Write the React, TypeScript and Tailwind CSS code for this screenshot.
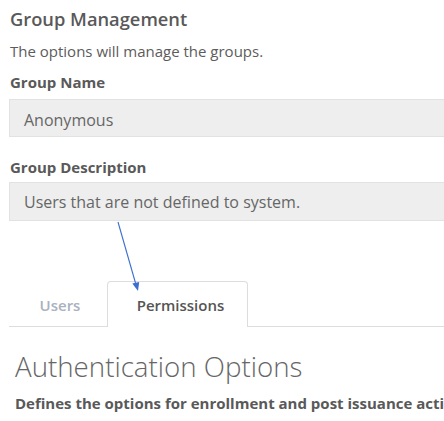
import React from "react";

export default function App() {
  return (
    <div
      className="relative w-[444px] h-[421px] overflow-hidden bg-white pl-[9px]"
      style={{ fontFamily: '"Open Sans", "Liberation Sans", sans-serif' }}
    >
      <div className="pt-[7px] pl-[1px] text-[18.3px] leading-[24px] font-semibold text-[#595959] whitespace-nowrap">
        Group Management
      </div>
      <div className="mt-[10px] pl-[1px] text-[15px] leading-[20px] text-[#5c5c5c] whitespace-nowrap">
        The options will manage the groups.
      </div>
      <div className="mt-[11px] pl-[1px] text-[15px] leading-[20px] font-bold text-[#595959] whitespace-nowrap">
        Group Name
      </div>
      <div className="mt-[7px] h-[38px] w-[460px] border border-[#e2e2e2] bg-[#eeeeee] pl-[14px] pt-[10px] text-[16px] leading-[20px] text-[#666666] whitespace-nowrap">
        Anonymous
      </div>
      <div className="mt-[20px] pl-[1px] text-[15px] leading-[20px] font-bold text-[#595959] whitespace-nowrap">
        Group Description
      </div>
      <div className="mt-[5px] h-[39px] w-[460px] border border-[#e2e2e2] bg-[#eeeeee] pl-[14px] pt-[9px] text-[16px] leading-[20px] text-[#666666] whitespace-nowrap">
        Users that are not defined to system.
      </div>

      <div className="mt-[60px] flex h-[46px] w-[460px] border-b border-[#dddddd]">
        <div className="flex w-[98px] items-start justify-center pt-[14px] pl-[4px] text-[15px] leading-[20px] font-semibold text-[#aab1bf]">
          Users
        </div>
        <div className="-mb-px flex w-[141px] items-start justify-center rounded-t-[4px] border border-b-0 border-[#dddddd] bg-white pt-[13px] pl-[6px] text-[15px] leading-[20px] font-semibold text-[#555555]">
          Permissions
        </div>
      </div>

      <div className="mt-[21px] ml-[6px] text-[27.7px] leading-[36px] font-light text-[#666666] whitespace-nowrap">
        Authentication Options
      </div>
      <div className="mt-[9px] ml-[6px] text-[15px] leading-[20px] font-bold text-[#595959] whitespace-nowrap">
        Defines the options for enrollment and post issuance actions.
      </div>

      <svg
        className="absolute left-0 top-0 pointer-events-none"
        width="444"
        height="421"
        viewBox="0 0 444 421"
      >
        <line x1="118" y1="222" x2="135.5" y2="283" stroke="#3b6fcf" strokeWidth="1.1" />
        <polygon points="138,291 132.3,283.5 139.2,282" fill="#3b6fcf" />
      </svg>
    </div>
  );
}
